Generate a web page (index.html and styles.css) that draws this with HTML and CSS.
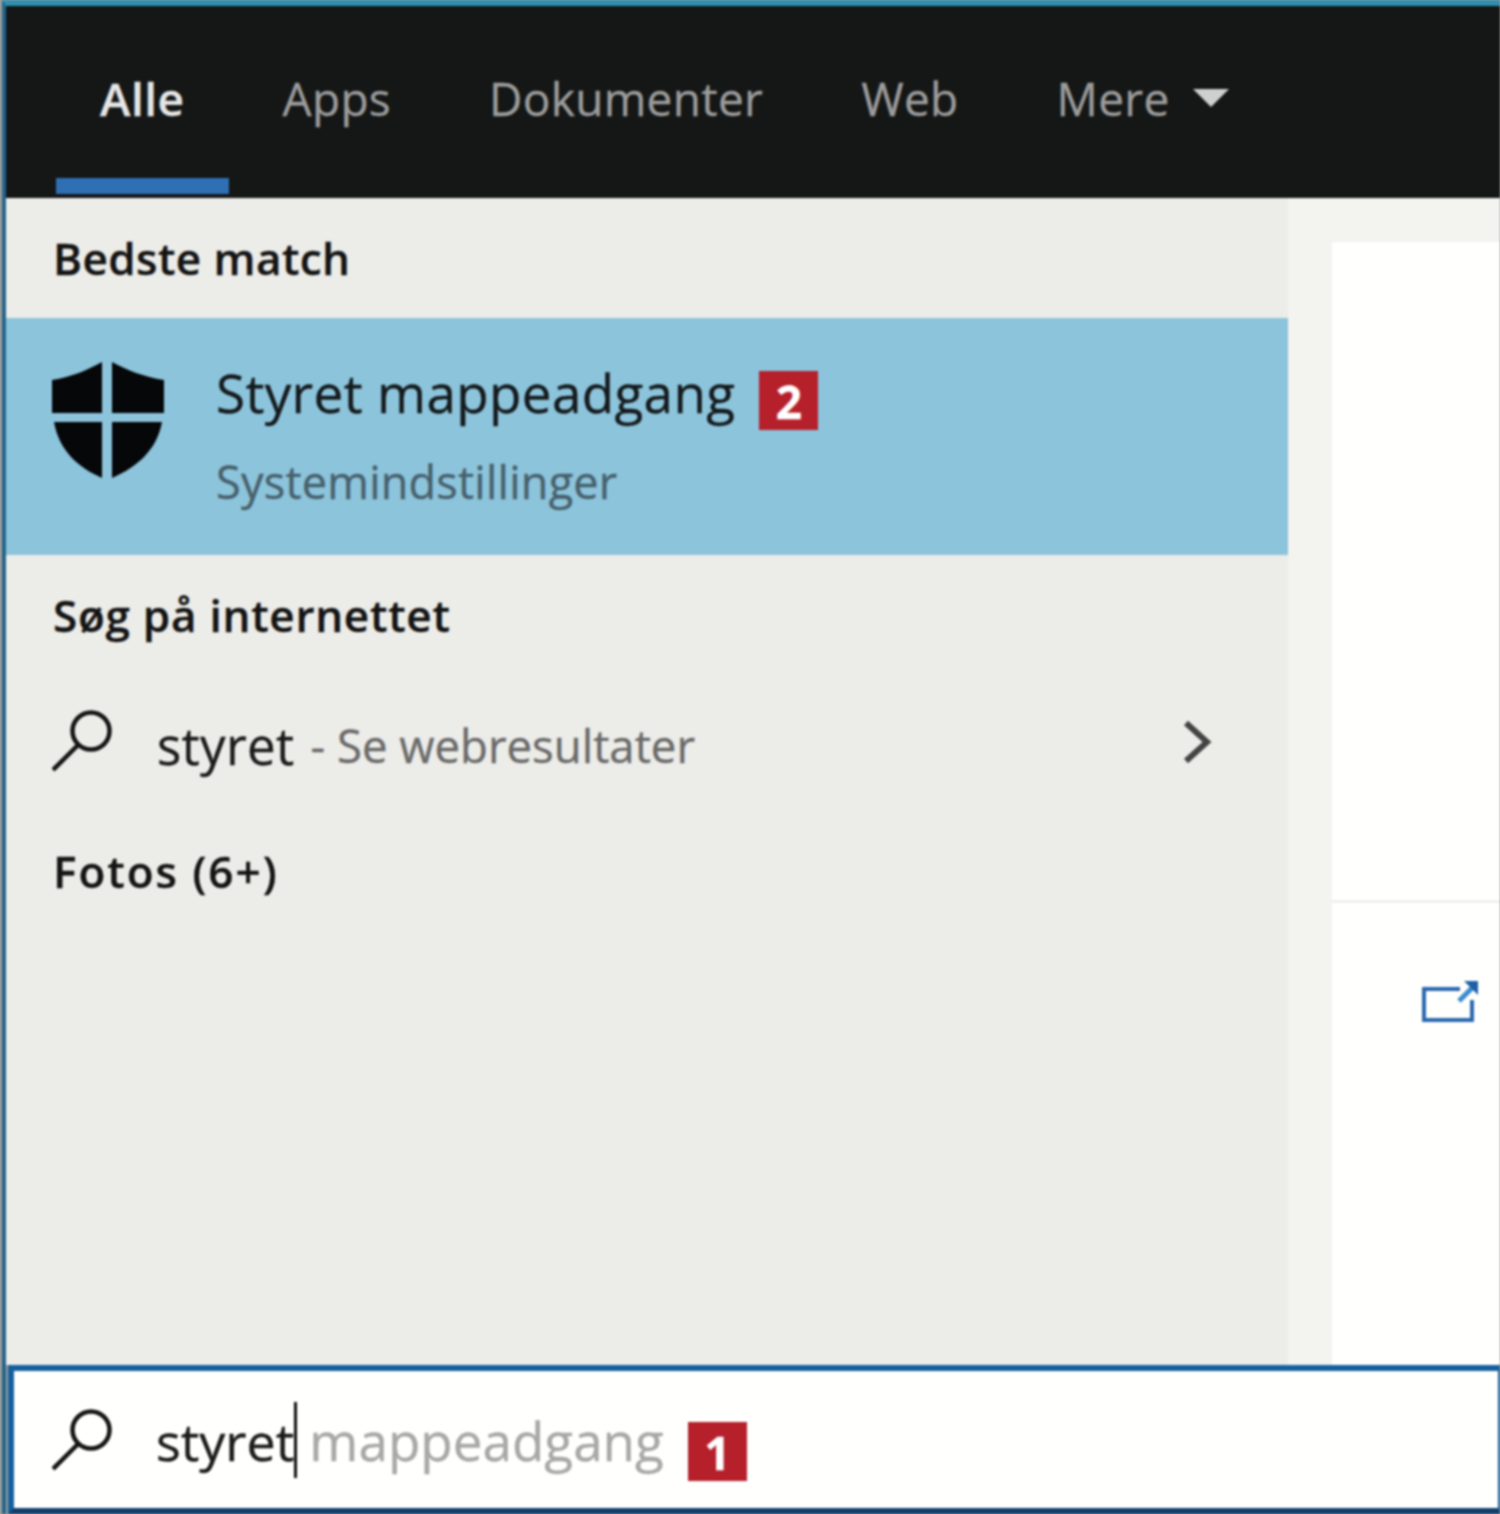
FILE: index.html
```html
<!DOCTYPE html>
<html lang="da">
<head>
<meta charset="utf-8">
<title>Søg</title>
<link rel="stylesheet" href="styles.css">
</head>
<body>
<div class="app">
  <nav class="tabs">
    <a class="tab active">Alle</a>
    <a class="tab">Apps</a>
    <a class="tab">Dokumenter</a>
    <a class="tab">Web</a>
    <a class="tab">Mere<span class="caret-down"></span></a>
  </nav>
  <main class="main">
    <section class="results">
      <h2 class="heading">Bedste match</h2>
      <div class="best">
        <svg class="shield" viewBox="0 0 112 117">
          <path d="M0 18C20 15 35 8 50 0V51H0Z"/>
          <path d="M60 0C75 8 92 15 112 18V51H60Z"/>
          <path d="M2 60H50V116C25 105 7 88 2 60Z"/>
          <path d="M60 60H110C105 88 85 105 60 116Z"/>
        </svg>
        <div class="best-text">
          <div class="best-title">Styret mappeadgang<span class="badge">2</span></div>
          <div class="best-sub">Systemindstillinger</div>
        </div>
      </div>
      <h2 class="heading heading-web">Søg på internettet</h2>
      <div class="web-row">
        <svg class="search-icon" viewBox="0 0 62 62">
          <circle cx="39" cy="21" r="18.5"/>
          <path d="M26 35 1 60"/>
        </svg>
        <span class="query">styret</span>
        <span class="web-hint">- Se webresultater</span>
        <svg class="chevron" viewBox="0 0 30 44"><path d="M4 3 25 22 4 41"/></svg>
      </div>
      <h2 class="heading heading-photos">Fotos (6+)</h2>
    </section>
    <aside class="preview">
      <div class="card-top"></div>
      <div class="card-bottom">
        <svg class="open-icon" viewBox="0 0 56 42">
          <path class="open-box" d="M38 9H2V40H50V20"/>
          <path class="open-arrow" d="M37 21 54 4"/>
          <path class="open-tip" d="M42 1H56V15Z"/>
        </svg>
      </div>
    </aside>
  </main>
  <div class="searchbox">
    <svg class="search-icon" viewBox="0 0 62 62">
      <circle cx="39" cy="21" r="18.5"/>
      <path d="M26 35 1 60"/>
    </svg>
    <span class="typed">styret</span><span class="cursor"></span><span class="ghost">mappeadgang</span><span class="badge badge-search">1</span>
  </div>
</div>
</body>
</html>
```
FILE: styles.css
```css
* { box-sizing: border-box; }
html, body { margin: 0; height: 100%; background: #fff; }
body { overflow: hidden; background: #a0a0a0; }
.app {
  width: 1498px;
  height: 1514px;
  margin-left: 2px;
  display: flex;
  flex-direction: column;
  border-top: 6px solid #2f8fb0;
  border-left: 4px solid #22658a;
  font-family: "Open Sans", "Noto Sans", sans-serif;
  -webkit-text-stroke: 0.35px currentColor;
  filter: blur(1px);
  overflow: hidden;
}
.tabs {
  height: 192px;
  flex: none;
  background: #141716;
  display: flex;
  gap: 10px;
  padding-left: 50px;
}
.tab {
  height: 188px;
  padding: 12px 44px 0;
  display: flex;
  align-items: center;
  font-size: 46px;
  letter-spacing: 0.3px;
  color: #9c9c9c;
  border-bottom: 16px solid transparent;
}
.tab.active { color: #e6e6e6; font-weight: 600; letter-spacing: 0.5px; border-bottom-color: #2f6fb3; }
.caret-down {
  width: 0;
  height: 0;
  margin-left: 23px;
  border-left: 18px solid transparent;
  border-right: 18px solid transparent;
  border-top: 18px solid #cfcfcf;
}
.main { flex: 1; display: flex; min-height: 0; }
.results {
  width: 1282px;
  flex: none;
  background: #ecece8;
  display: flex;
  flex-direction: column;
}
.heading {
  margin: 0;
  padding-left: 47px;
  display: flex;
  align-items: center;
  font-size: 44px;
  font-weight: 600;
  letter-spacing: 0.45px;
  color: #141414;
  height: 120px;
}
.heading-web { height: 125px; padding-bottom: 6px; letter-spacing: 0.75px; }
.heading-photos { height: 125px; padding-bottom: 4px; letter-spacing: 2px; }
.best {
  height: 237px;
  background: #8cc4dc;
  display: flex;
  padding: 44px 0 0 46px;
  gap: 52px;
}
.shield { width: 112px; height: 117px; fill: #050708; flex: none; }
.best-text { margin-top: -2px; }
.best-title {
  font-size: 53px;
  line-height: 66px;
  letter-spacing: 0.35px;
  color: #151a1c;
  display: flex;
  align-items: flex-start;
}
.best-sub {
  font-size: 45px;
  line-height: 60px;
  letter-spacing: 0.25px;
  color: #47606b;
  margin-top: 22px;
}
.badge {
  display: inline-flex;
  align-items: center;
  justify-content: center;
  width: 59px;
  height: 59px;
  background: #b5202b;
  color: #fff;
  font-size: 46px;
  font-weight: 700;
  letter-spacing: 0;
  margin: 11px 0 0 24px;
  flex: none;
}
.web-row {
  height: 130px;
  display: flex;
  align-items: center;
  padding-left: 46px;
  color: #1e1e1e;
}
.search-icon {
  width: 62px;
  height: 62px;
  flex: none;
  fill: none;
  stroke: #151515;
  stroke-width: 4.5;
}
.web-row .search-icon { margin-bottom: 8px; }
.query { margin-left: 43px; font-size: 51px; letter-spacing: 0.3px; color: #1b1b1b; }
.web-hint { margin-left: 16px; font-size: 45.5px; color: #6a6a6a; }
.chevron {
  width: 30px;
  height: 44px;
  margin-left: auto;
  margin-right: 76px;
  margin-bottom: 6px;
  fill: none;
  stroke: #444;
  stroke-width: 6;
}
.preview {
  flex: 1;
  background: #f3f3f0;
  padding: 44px 0 0 44px;
  display: flex;
  flex-direction: column;
}
.card-top { height: 661px; flex: none; background: #fffffd; border-bottom: 3px solid #f0f0ec; }
.card-bottom { flex: 1; background: #fffffd; padding: 77px 0 0 90px; }
.open-icon { display: block; width: 56px; height: 42px; fill: none; stroke-width: 4; }
.open-box { stroke: #2a68ae; }
.open-arrow { stroke: #3a8ccc; stroke-width: 5; }
.open-tip { fill: #1f5fa8; }
.searchbox {
  height: 149px;
  flex: none;
  background: #fffffd;
  border-top: 6px solid #14609f;
  border-left: 6px solid #14609f;
  border-right: 2px solid #14609f;
  border-bottom: 6px solid #123f6c;
  margin-left: 2px;
  display: flex;
  align-items: center;
  padding-left: 38px;
}
.typed { margin-left: 42px; padding-top: 2px; font-size: 52px; color: #1b1b1b; }
.cursor { width: 3px; height: 76px; background: #101010; flex: none; }
.ghost { margin-left: 12px; padding-top: 2px; font-size: 53px; color: #a8a8a8; }
.badge-search { margin: 24px 0 0 24px; }
```
